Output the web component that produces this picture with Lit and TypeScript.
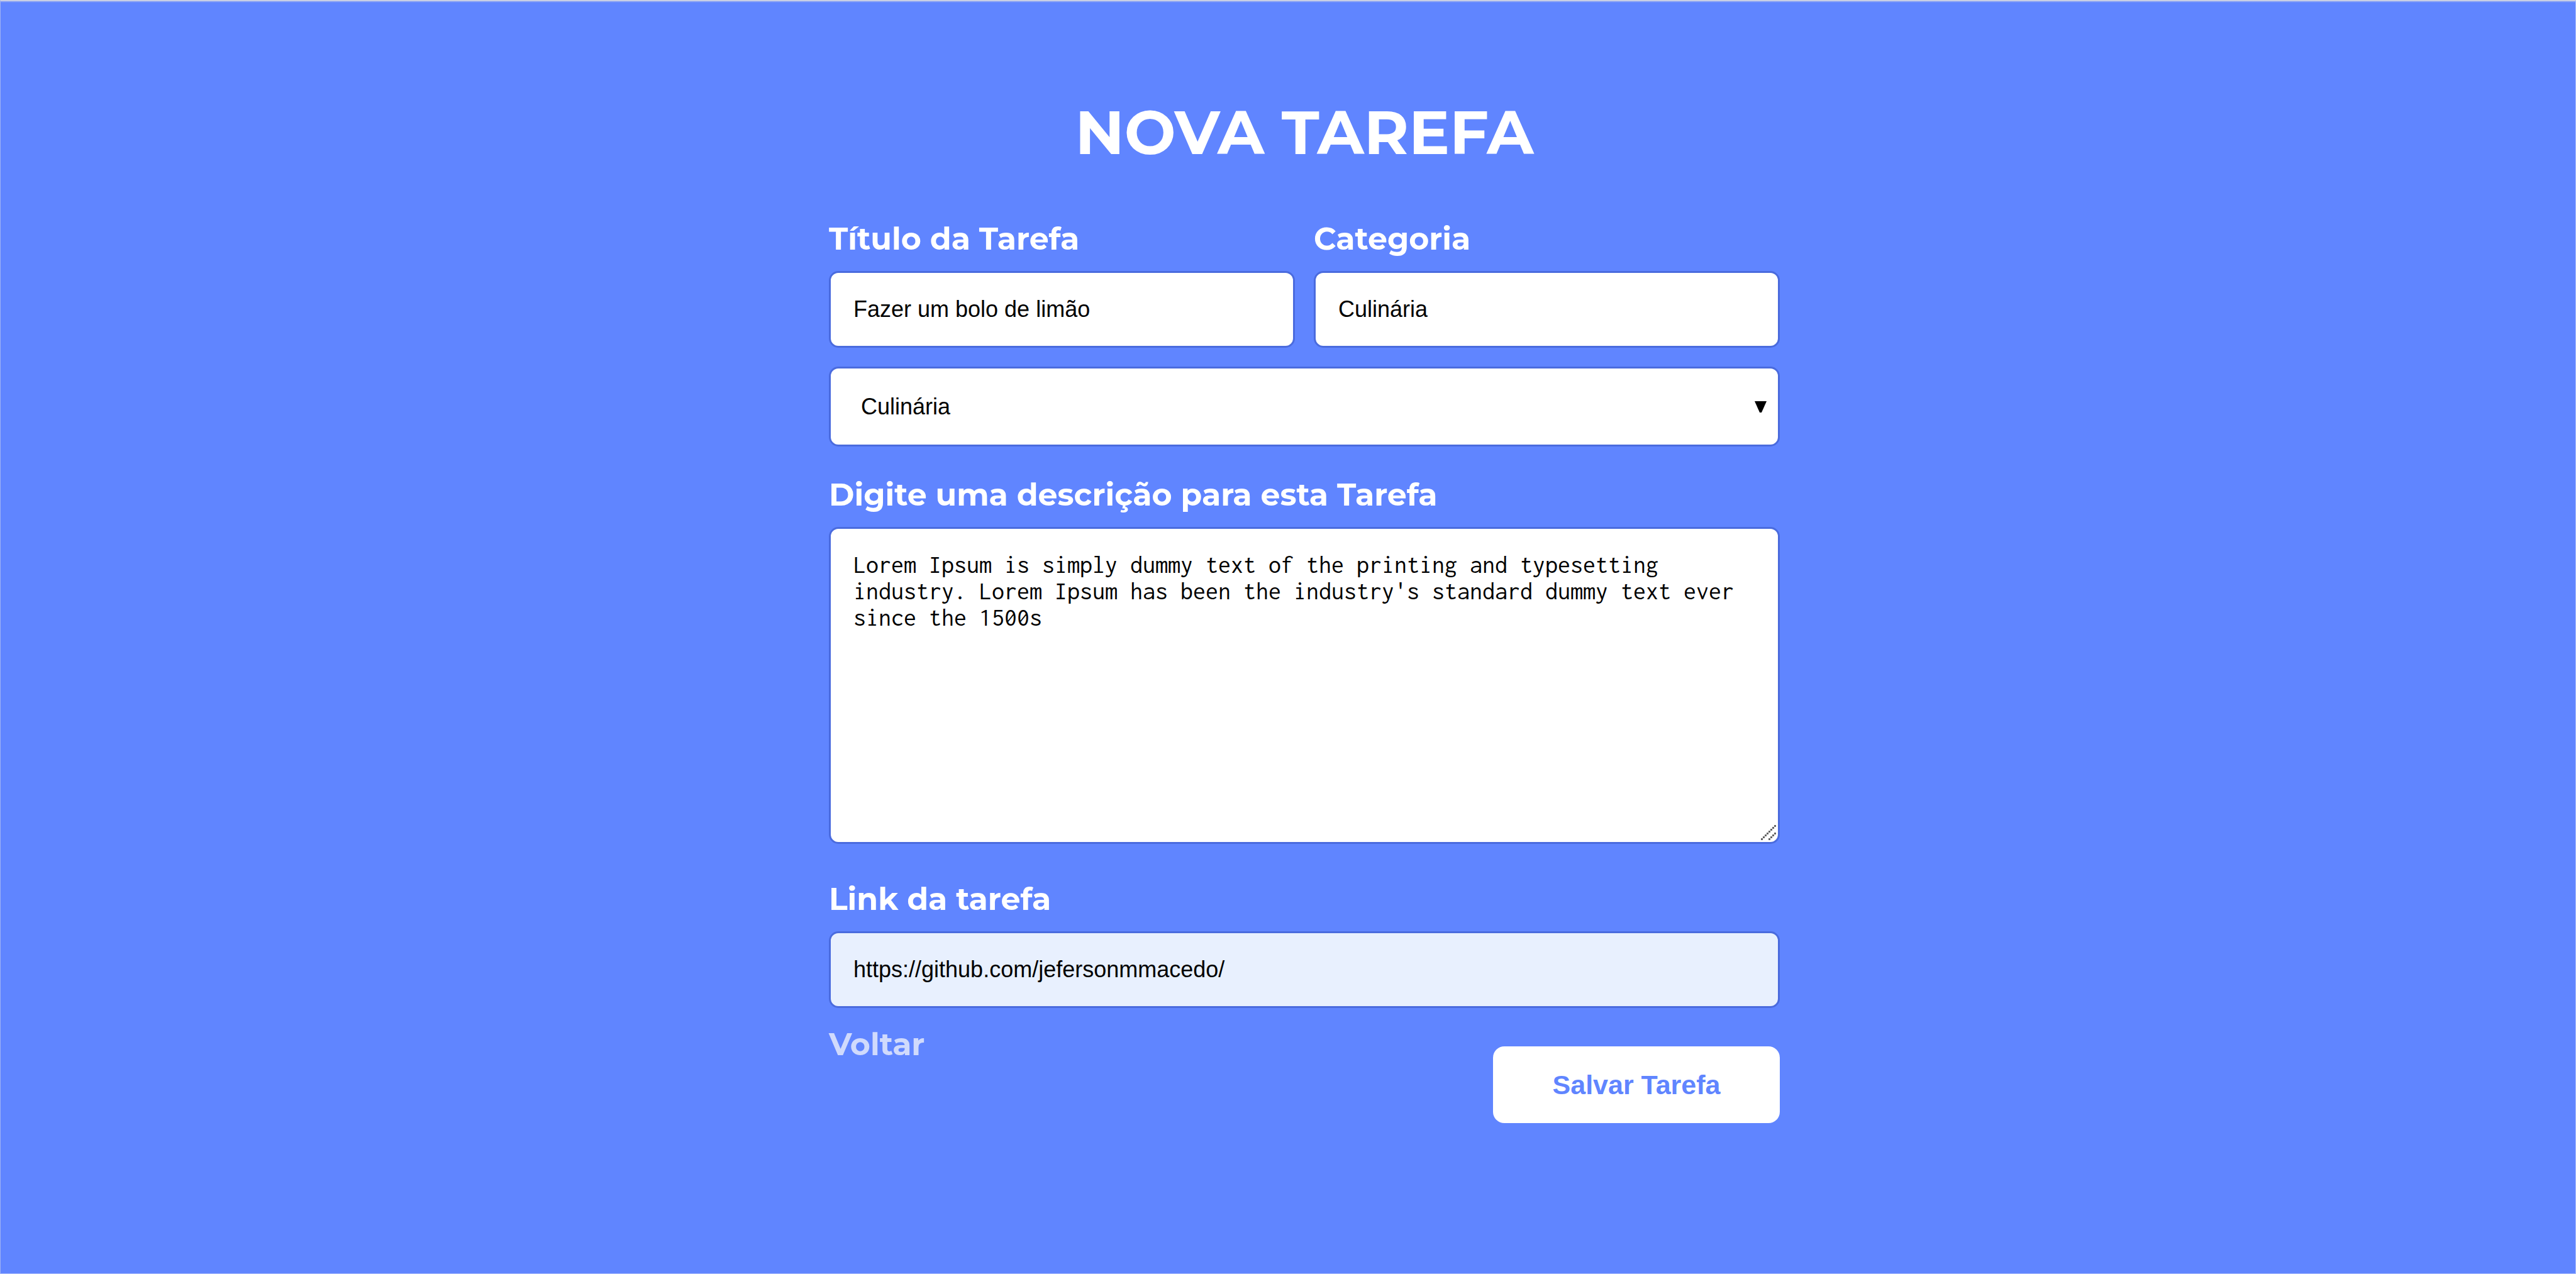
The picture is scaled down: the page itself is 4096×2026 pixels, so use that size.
import { LitElement, html, css, svg } from "lit";
import { customElement, state } from "lit/decorators.js";

const LOREM =
  "Lorem Ipsum is simply dummy text of the printing and typesetting industry. Lorem Ipsum has been the industry's standard dummy text ever since the 1500s";

/** Cells of the 8x8 resize grip: one long and one short diagonal. */
const GRIP_CELLS: Array<[number, number]> = [
  [0, 7], [1, 6], [2, 5], [3, 4], [4, 3], [5, 2], [6, 1], [7, 0],
  [4, 7], [5, 6], [6, 5], [7, 4],
];

@customElement("app-root")
export class AppRoot extends LitElement {
  static styles = css`
    :host {
      --primary: #6085ff;
      --outline: #4a6bde;
      display: flex;
      flex-direction: column;
      box-sizing: border-box;
      min-height: 100vh;
      border: 1px solid #afc0fb;
      border-top-color: #dcdddf;
      border-left-color: #9db1f4;
      background: linear-gradient(#bcc6e8, var(--primary) 3px) var(--primary);
      color: #ffffff;
      font-family: "Montserrat", "Open Sans", sans-serif;
    }

    .page {
      display: flex;
      flex-direction: column;
      align-items: center;
      padding: 149px 0 0 52px;
    }

    .title {
      margin: 0 0 80px;
      font-size: 97px;
      line-height: 120px;
      font-weight: 700;
      text-transform: uppercase;
    }

    .form {
      display: flex;
      flex-direction: column;
      width: 100%;
      max-width: 1512px;
    }

    .row {
      display: grid;
      grid-template-columns: 1fr 1fr;
      gap: 30px;
      margin-bottom: 30px;
    }

    .field {
      display: flex;
      flex-direction: column;
      gap: 21px;
    }

    .label,
    .back {
      font-size: 49px;
      line-height: 60px;
      font-weight: 700;
    }

    .control {
      display: block;
      box-sizing: border-box;
      width: 100%;
      margin: 0;
      padding: 0 36px;
      border: 3px solid var(--outline);
      border-radius: 15px;
      outline: none;
      background: #ffffff;
      color: #000000;
      font: 36px "Liberation Sans", Arial, sans-serif;
      appearance: none;
    }

    .input {
      height: 122px;
    }

    .autofilled {
      background: #e8f0fe;
    }

    .select {
      height: 127px;
      padding: 0 48px;
    }

    .area {
      height: 504px;
      padding: 36px;
      font: 40px/42px "Inconsolata", "Liberation Mono", monospace;
      resize: none;
      overflow: hidden;
    }

    .stack {
      display: grid;
    }

    .stack > * {
      grid-area: 1 / 1;
    }

    .arrow {
      place-self: center end;
      width: 19px;
      height: 18px;
      margin-right: 21px;
      fill: #000000;
      pointer-events: none;
    }

    .grip {
      place-self: end;
      width: 24px;
      height: 24px;
      margin: 0 6px 6px 0;
      fill: #666666;
      pointer-events: none;
    }

    .description {
      margin: 47px 0 58px;
    }

    .actions {
      display: flex;
      justify-content: space-between;
      align-items: flex-start;
      margin-top: 28px;
    }

    .back {
      color: #d0dafc;
      text-decoration: none;
    }

    .save {
      width: 456px;
      height: 122px;
      margin: 33px 0 0;
      padding: 0;
      border: 0;
      border-radius: 18px;
      background: #ffffff;
      color: var(--primary);
      font: 700 43px "Liberation Sans", Arial, sans-serif;
      cursor: pointer;
    }
  `;

  @state() private category = "Culinária";

  private onCategory(e: Event) {
    this.category = (e.target as HTMLSelectElement).value;
  }

  render() {
    return html`
      <main class="page">
        <h1 class="title">Nova Tarefa</h1>
        <form class="form" @submit=${(e: Event) => e.preventDefault()}>
          <div class="row">
            <div class="field">
              <label class="label" for="titulo">Título da Tarefa</label>
              <input class="control input" id="titulo" type="text" value="Fazer um bolo de limão" />
            </div>
            <div class="field">
              <label class="label" for="categoria">Categoria</label>
              <input class="control input" id="categoria" type="text" .value=${this.category} />
            </div>
          </div>

          <div class="stack">
            <select class="control select" aria-label="Categoria" @change=${this.onCategory}>
              <option value="Culinária">Culinária</option>
            </select>
            <svg class="arrow" viewBox="0 0 19 18" aria-hidden="true">
              <path d="M0 0H19L11 18H8Z" />
            </svg>
          </div>

          <div class="field description">
            <label class="label" for="descricao">Digite uma descrição para esta Tarefa</label>
            <div class="stack">
              <textarea class="control area" id="descricao" spellcheck="false" .value=${LOREM}></textarea>
              <svg class="grip" viewBox="0 0 8 8" aria-hidden="true">
                ${GRIP_CELLS.map(([x, y]) => svg`<rect x=${x} y=${y} width="1" height="1" />`)}
              </svg>
            </div>
          </div>

          <div class="field">
            <label class="label" for="link">Link da tarefa</label>
            <input
              class="control input autofilled"
              id="link"
              type="url"
              value="https://github.com/jefersonmmacedo/"
            />
          </div>

          <div class="actions">
            <a class="back" href="#">Voltar</a>
            <button class="save" type="submit">Salvar Tarefa</button>
          </div>
        </form>
      </main>
    `;
  }
}
